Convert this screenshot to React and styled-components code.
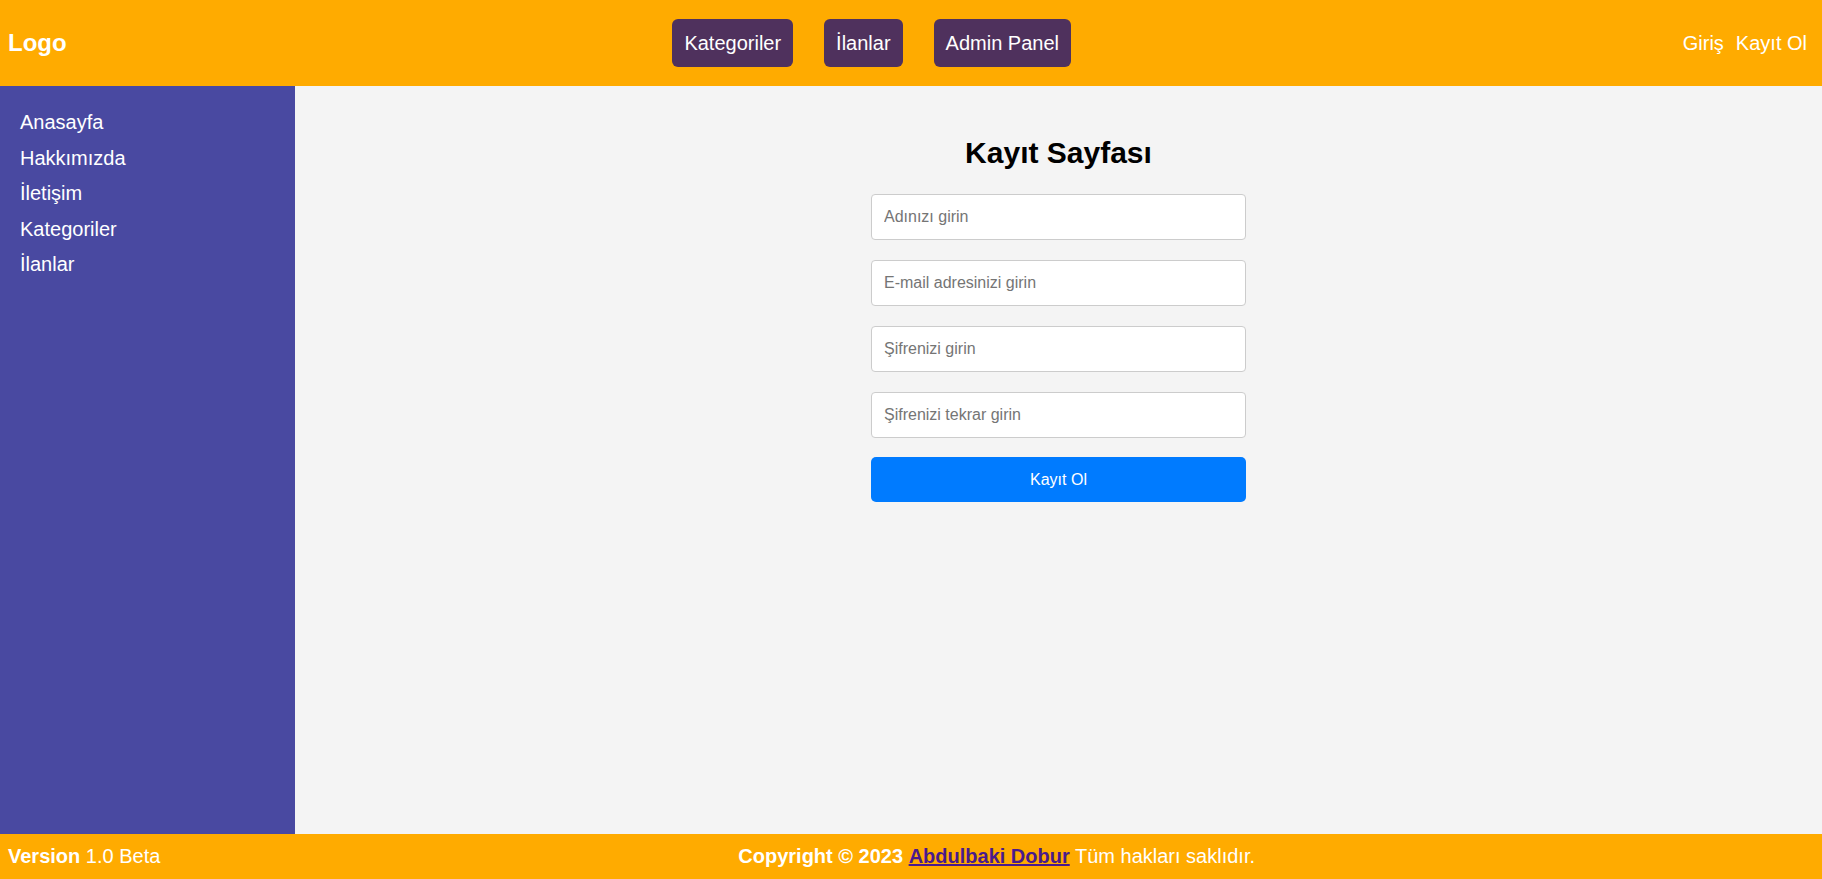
import React from 'react'
import styled, { createGlobalStyle } from 'styled-components'

const GlobalStyle = createGlobalStyle`
  html, body, #root {
    margin: 0;
    padding: 0;
    height: 100%;
  }
  body {
    font-family: "Liberation Sans", Arial, sans-serif;
  }
  * {
    box-sizing: border-box;
  }
`

const Page = styled.div`
  height: 100vh;
  display: flex;
  flex-direction: column;
`

const Header = styled.header`
  height: 86px;
  flex-shrink: 0;
  background-color: #ffab00;
  display: flex;
  justify-content: space-between;
  align-items: center;
  padding: 0 15px 0 8px;
`

const Logo = styled.div`
  font-size: 24px;
  font-weight: bold;
  color: #fff;
`

const NavButtons = styled.nav`
  display: flex;
  gap: 31px;
  margin-right: 6px;
`

const NavButton = styled.button`
  background-color: #4f315d;
  color: #fff;
  border: none;
  border-radius: 6px;
  padding: 12px;
  font-family: inherit;
  font-size: 20px;
  line-height: 24px;
  cursor: pointer;
`

const AuthLinks = styled.div`
  display: flex;
  gap: 12px;
`

const AuthLink = styled.a`
  color: #fff;
  font-size: 20px;
  text-decoration: none;
  cursor: pointer;
`

const Body = styled.div`
  flex: 1;
  display: flex;
  min-height: 0;
`

const Sidebar = styled.aside`
  width: 295px;
  flex-shrink: 0;
  background-color: #4949a1;
  padding: 19px 20px;
`

const SideList = styled.ul`
  list-style: none;
  margin: 0;
  padding: 0;
`

const SideItem = styled.li`
  color: #fff;
  font-size: 20px;
  line-height: 23.5px;
  padding: 6px 0;
  cursor: pointer;
`

const Main = styled.main`
  flex: 1;
  background-color: #f4f4f4;
  padding: 20px;
  display: flex;
  flex-direction: column;
  align-items: center;
`

const Title = styled.h2`
  font-size: 30px;
  font-weight: bold;
  color: #000;
  margin: 30px 0 24px;
`

const Form = styled.form`
  width: 375px;
  display: flex;
  flex-direction: column;
  gap: 20px;
`

const Input = styled.input`
  width: 100%;
  height: 46px;
  padding: 0 12px;
  border: 1px solid #ccc;
  border-radius: 4px;
  background: #fff;
  font-family: inherit;
  font-size: 16px;
  &::placeholder {
    color: #757575;
  }
`

const SubmitButton = styled.button`
  width: 100%;
  height: 45px;
  margin-top: -1px;
  background-color: #007bff;
  color: #fff;
  border: none;
  border-radius: 5px;
  font-family: inherit;
  font-size: 16px;
  cursor: pointer;
`

const Footer = styled.footer`
  height: 45px;
  flex-shrink: 0;
  background-color: #ffab00;
  display: flex;
  align-items: center;
  padding: 0 8px 0 8px;
  color: #fff;
  font-size: 20px;
`

const Version = styled.div``

const Copyright = styled.div`
  flex: 1;
  text-align: center;
  margin-left: 19px;
`

const AuthorLink = styled.a`
  color: #4a1a8c;
  font-weight: bold;
  text-decoration: underline;
`

const fields = [
  { type: 'text', placeholder: 'Adınızı girin' },
  { type: 'email', placeholder: 'E-mail adresinizi girin' },
  { type: 'password', placeholder: 'Şifrenizi girin' },
  { type: 'password', placeholder: 'Şifrenizi tekrar girin' },
]

const App = () => {
  return (
    <Page>
      <GlobalStyle />
      <Header>
        <Logo>Logo</Logo>
        <NavButtons>
          <NavButton>Kategoriler</NavButton>
          <NavButton>İlanlar</NavButton>
          <NavButton>Admin Panel</NavButton>
        </NavButtons>
        <AuthLinks>
          <AuthLink>Giriş</AuthLink>
          <AuthLink>Kayıt Ol</AuthLink>
        </AuthLinks>
      </Header>
      <Body>
        <Sidebar>
          <SideList>
            <SideItem>Anasayfa</SideItem>
            <SideItem>Hakkımızda</SideItem>
            <SideItem>İletişim</SideItem>
            <SideItem>Kategoriler</SideItem>
            <SideItem>İlanlar</SideItem>
          </SideList>
        </Sidebar>
        <Main>
          <Title>Kayıt Sayfası</Title>
          <Form onSubmit={(e) => e.preventDefault()}>
            {fields.map((f) => (
              <Input key={f.placeholder} type={f.type} placeholder={f.placeholder} />
            ))}
            <SubmitButton type="submit">Kayıt Ol</SubmitButton>
          </Form>
        </Main>
      </Body>
      <Footer>
        <Version>
          <b>Version</b> 1.0 Beta
        </Version>
        <Copyright>
          <b>Copyright © 2023</b> <AuthorLink href="#">Abdulbaki Dobur</AuthorLink> Tüm hakları saklıdır.
        </Copyright>
      </Footer>
    </Page>
  )
}

export default App
